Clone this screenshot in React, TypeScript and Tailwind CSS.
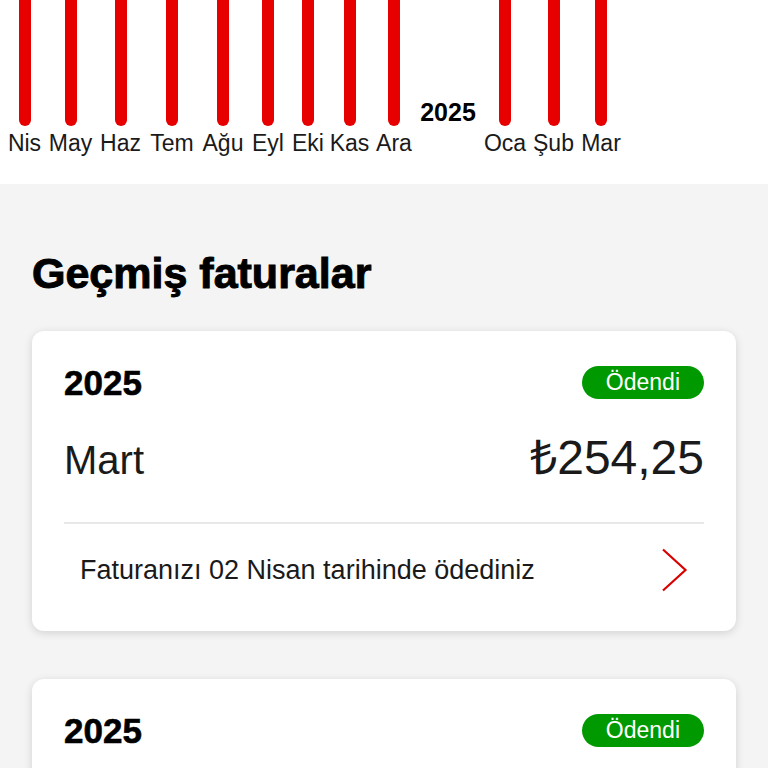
interface MonthCol {
  label: string;
  width: string;
  year?: boolean;
}

const months: MonthCol[] = [
  { label: "Nis", width: "w-[45px]" },
  { label: "May", width: "w-[47px]" },
  { label: "Haz", width: "w-[53px]" },
  { label: "Tem", width: "w-[50px]" },
  { label: "Ağu", width: "w-[52px]" },
  { label: "Eyl", width: "w-[38px]" },
  { label: "Eki", width: "w-[42px]" },
  { label: "Kas", width: "w-[41px]" },
  { label: "Ara", width: "w-[48px]" },
  { label: "2025", width: "w-[60px]", year: true },
  { label: "Oca", width: "w-[54px]" },
  { label: "Şub", width: "w-[43px]" },
  { label: "Mar", width: "w-[52px]" },
];

interface Bill {
  year: string;
  month: string;
  amount: string;
  note: string;
}

const bills: Bill[] = [
  { year: "2025", month: "Mart", amount: "₺254,25", note: "Faturanızı 02 Nisan tarihinde ödediniz" },
  { year: "2025", month: "Şubat", amount: "₺254,25", note: "Faturanızı 03 Mart tarihinde ödediniz" },
];

function Chevron() {
  return (
    <svg width="27" height="44" viewBox="0 0 27 44" fill="none" className="shrink-0">
      <path d="M2 1.5 L24.5 22 L2 42.5" stroke="#d90000" strokeWidth="2.2" strokeLinejoin="miter" />
    </svg>
  );
}

function BillCard({ bill }: { bill: Bill }) {
  return (
    <div className="bg-white rounded-[12px] shadow-[0_2px_8px_rgba(0,0,0,0.14)] px-8 pt-[34px] pb-[39px]">
      {/* Year + status */}
      <div className="flex items-center justify-between h-[35px]">
        <span className="text-[35px] leading-none font-bold text-black [-webkit-text-stroke:0.6px_black]">{bill.year}</span>
        <span className="h-[33px] px-[24px] rounded-full bg-[#009a00] text-white text-[23px] leading-none flex items-center">
          Ödendi
        </span>
      </div>
      {/* Month + amount */}
      <div className="flex items-baseline justify-between mt-[34px]">
        <span className="text-[40px] leading-none text-[#1a1a1a]">{bill.month}</span>
        <span className="text-[48px] leading-none text-[#1a1a1a]">{bill.amount}</span>
      </div>
      <div className="h-[2px] bg-[#e8e8e8] mt-[40px]" />
      <div className="flex items-center justify-between px-4 mt-[24px] h-[44px]">
        <span className="text-[27px] leading-none text-[#1a1a1a]">{bill.note}</span>
        <Chevron />
      </div>
    </div>
  );
}

export default function App() {
  return (
    <div className="w-[768px] h-[768px] overflow-hidden bg-[#f4f4f4] font-['Liberation_Sans',Arial,sans-serif]">
      {/* Usage chart */}
      <div className="bg-white h-[184px] pl-[2px] flex items-start">
        {months.map((m) => (
          <div key={m.label} className={`${m.width} flex flex-col items-center shrink-0`}>
            {m.year ? (
              <div className="h-[126px] flex items-end">
                <span className="text-[25px] leading-none font-bold text-black pb-[1px]">{m.label}</span>
              </div>
            ) : (
              <div className="w-[12px] h-[126px] bg-[#e60000] rounded-b-full" />
            )}
            {!m.year && (
              <span className="mt-[6px] text-[23px] leading-none text-[#1a1a1a] whitespace-nowrap">{m.label}</span>
            )}
          </div>
        ))}
      </div>

      <div className="px-8">
        <h2 className="pt-[68px] text-[43px] leading-none font-bold text-black [-webkit-text-stroke:1px_black]">
          Geçmiş faturalar
        </h2>
        <div className="mt-[36px] flex flex-col gap-[48px]">
          {bills.map((b, i) => (
            <BillCard key={i} bill={b} />
          ))}
        </div>
      </div>
    </div>
  );
}
